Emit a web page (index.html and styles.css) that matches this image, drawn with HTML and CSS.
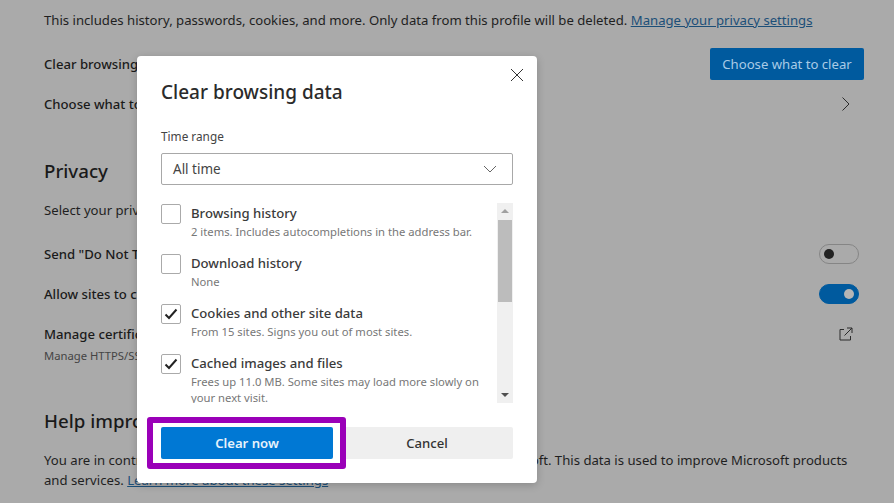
FILE: index.html
```html
<!DOCTYPE html>
<html lang="en">
<head>
<meta charset="utf-8">
<title>Clear browsing data</title>
<link rel="stylesheet" href="styles.css">
</head>
<body>
<main class="page">
  <p class="intro">This includes history, passwords, cookies, and more. Only data from this profile will be deleted. <a href="#">Manage your privacy settings</a></p>
  <div class="row row-clear"><span class="strong">Clear browsing data now</span><button class="btn-page">Choose what to clear</button></div>
  <div class="row row-choose"><span class="strong">Choose what to clear every time you close the browser</span>
    <svg class="ico" width="12" height="16" viewBox="0 0 12 16"><path d="M2.500 1.500 9 8l-6.500 6.500" fill="none" stroke="#2b2b2b" stroke-width="1"/></svg></div>
  <h2 class="section section-privacy">Privacy</h2>
  <p class="sub">Select your privacy settings for Microsoft Edge.</p>
  <div class="row row-dnt"><span class="strong">Send "Do Not Track" requests</span><span class="toggle"><i></i></span></div>
  <div class="row row-allow"><span class="strong">Allow sites to check if you have payment methods saved</span><span class="toggle on"><i></i></span></div>
  <div class="row row-cert">
    <div><div class="strong">Manage certificates</div><div class="mini">Manage HTTPS/SSL certificates and settings</div></div>
    <svg class="ico ext" width="14" height="14" viewBox="0 0 14 14"><path d="M5 2.500H1v10.500h10.500V9M8 1H13v5M13 1 5.500 8.500" fill="none" stroke="#2b2b2b" stroke-width="1"/></svg>
  </div>
  <h2 class="section section-help">Help improve Microsoft Edge</h2>
  <p class="foot">You are in control of your privacy and the data you choose to share with Microsoft. This data is used to improve Microsoft products and services. <a href="#">Learn more about these settings</a></p>
</main>

<section class="dialog">
  <button class="close" aria-label="Close"><svg width="14" height="14" viewBox="0 0 14 14"><path d="M1 1l12 12M13 1 1 13" stroke="#333" stroke-width="1" fill="none"/></svg></button>
  <h1 class="title">Clear browsing data</h1>
  <div class="label">Time range</div>
  <div class="select"><span>All time</span><svg width="14" height="8" viewBox="0 0 14 8"><path d="M1 1l6 6 6-6" fill="none" stroke="#666" stroke-width="1"/></svg></div>
  <div class="list-wrap">
    <div class="list">
      <div class="item"><span class="cb"></span><div><div class="name">Browsing history</div><div class="desc">2 items. Includes autocompletions in the address bar.</div></div></div>
      <div class="item"><span class="cb"></span><div><div class="name">Download history</div><div class="desc">None</div></div></div>
      <div class="item"><span class="cb"><svg width="14" height="12" viewBox="0 0 14 12"><path d="M1.500 6.500 5 10l7.500-8.500" fill="none" stroke="#222" stroke-width="2"/></svg></span><div><div class="name">Cookies and other site data</div><div class="desc">From 15 sites. Signs you out of most sites.</div></div></div>
      <div class="item"><span class="cb"><svg width="14" height="12" viewBox="0 0 14 12"><path d="M1.500 6.500 5 10l7.500-8.500" fill="none" stroke="#222" stroke-width="2"/></svg></span><div><div class="name">Cached images and files</div><div class="desc">Frees up 11.0 MB. Some sites may load more slowly on your next visit.</div></div></div>
    </div>
    <div class="scroll">
      <span class="arrow up"></span>
      <span class="thumb"></span>
      <span class="arrow down"></span>
    </div>
  </div>
  <div class="actions">
    <button class="primary">Clear now</button>
    <button class="cancel">Cancel</button>
  </div>
</section>
<div class="highlight"></div>
</body>
</html>
```
FILE: styles.css
```css
* { box-sizing: border-box; }
html, body { margin: 0; height: 100%; }
body {
  width: 894px; height: 503px; overflow: hidden; position: relative;
  background: #aaaaaa; color: #1f1f1f;
  font-family: "Noto Sans", "Open Sans", sans-serif; font-size: 13.150px;
}
.page { padding: 10px 30px 0 44px; }
p { margin: 0; }
a { color: #1c4f78; text-decoration: underline; }
.intro { line-height: 20px; }
.row { display: flex; justify-content: space-between; align-items: center; }
.strong { font-weight: 500; color: #1a1a1a; }
.row-clear { margin-top: 18px; height: 32px; }
.btn-page {
  width: 154px; height: 32px; border: 0; border-radius: 2px;
  background: #005a9e; color: #a9cbe6; font: inherit; padding: 0;
}
.row-choose { margin-top: 8px; height: 32px; padding-right: 12px; }
.section { margin: 0; font-size: 18.700px; font-weight: 500; line-height: 28px; color: #1a1a1a; }
.section-privacy { margin-top: 37px; }
.sub { margin-top: 15px; line-height: 20px; }
.row-dnt { margin-top: 18px; height: 32px; padding-right: 5px; }
.row-allow { margin-top: 8px; height: 32px; padding-right: 5px; }
.toggle {
  width: 40px; height: 20px; border-radius: 10px; border: 1px solid #858585;
  display: flex; align-items: center; padding: 0 4px;
}
.toggle i { width: 10px; height: 10px; border-radius: 50%; background: #222; }
.toggle.on { background: #005a9e; border-color: #005a9e; justify-content: flex-end; }
.toggle.on i { background: #b5b5b5; }
.row-cert { margin-top: 15px; align-items: flex-start; padding-right: 11px; }
.ext { margin-top: 2px; }
.mini { font-size: 11.250px; line-height: 16px; margin-top: 5px; color: #444; }
.section-help { margin-top: 43px; }
.foot { margin-top: 15px; line-height: 20px; }

.dialog {
  position: absolute; left: 137px; top: 56px; width: 400px; height: 427px;
  background: #fff; border-radius: 4px; padding: 22px 24px 0;
  box-shadow: 0 2px 8px rgba(0,0,0,.2); color: #333;
}
.close { position: absolute; right: 13px; top: 12px; width: 14px; height: 14px; padding: 0; border: 0; background: none; display: flex; }
.title { margin: 0; font-size: 19px; font-weight: 500; line-height: 28px; color: #2b2b2b; }
.label { margin-top: 22px; font-size: 11.800px; line-height: 16px; color: #444; }
.select {
  margin-top: 9px; height: 32px; border: 1px solid #a8a8a8; border-radius: 2px;
  display: flex; align-items: center; justify-content: space-between; padding: 0 15px 0 11px;
  font-size: 13.500px; color: #444;
}
.list-wrap { margin-top: 18px; height: 200px; display: flex; justify-content: space-between; overflow: hidden; }
.list { width: 330px; }
.item { display: flex; gap: 10px; height: 50px; padding-top: 1px; }
.cb {
  flex: none; width: 20px; height: 20px; border: 1px solid #aaa; border-radius: 2px;
  display: flex; align-items: center; justify-content: center;
}
.name { font-size: 13.150px; line-height: 18px; font-weight: 500; color: #3a3a3a; }
.desc { font-size: 11.250px; line-height: 16px; margin-top: 2px; color: #777; }
.scroll { width: 16px; background: #f0f0f0; display: flex; flex-direction: column; align-items: center; }
.arrow { flex: none; width: 0; height: 0; border-left: 4px solid transparent; border-right: 4px solid transparent; }
.arrow.up { margin-top: 6px; border-bottom: 4px solid #a0a0a0; }
.thumb { width: 14px; height: 82px; margin-top: 7px; background: #bcbcbc; }
.arrow.down { margin-top: auto; margin-bottom: 6px; border-top: 4px solid #505050; }
.actions { margin-top: 24px; display: flex; gap: 8px; }
.actions button { flex: 1; height: 32px; border: 0; border-radius: 2px; font: inherit; font-size: 13.150px; padding: 0; }
.primary { background: #0078d4; color: #e6f2fb; font-weight: 600 !important; }
.cancel { background: #efefef; color: #333; font-weight: 500 !important; }
.highlight {
  position: absolute; left: 147px; top: 417px; width: 199px; height: 52px;
  border: 6px solid #9a00b8; border-radius: 3px;
}
```
